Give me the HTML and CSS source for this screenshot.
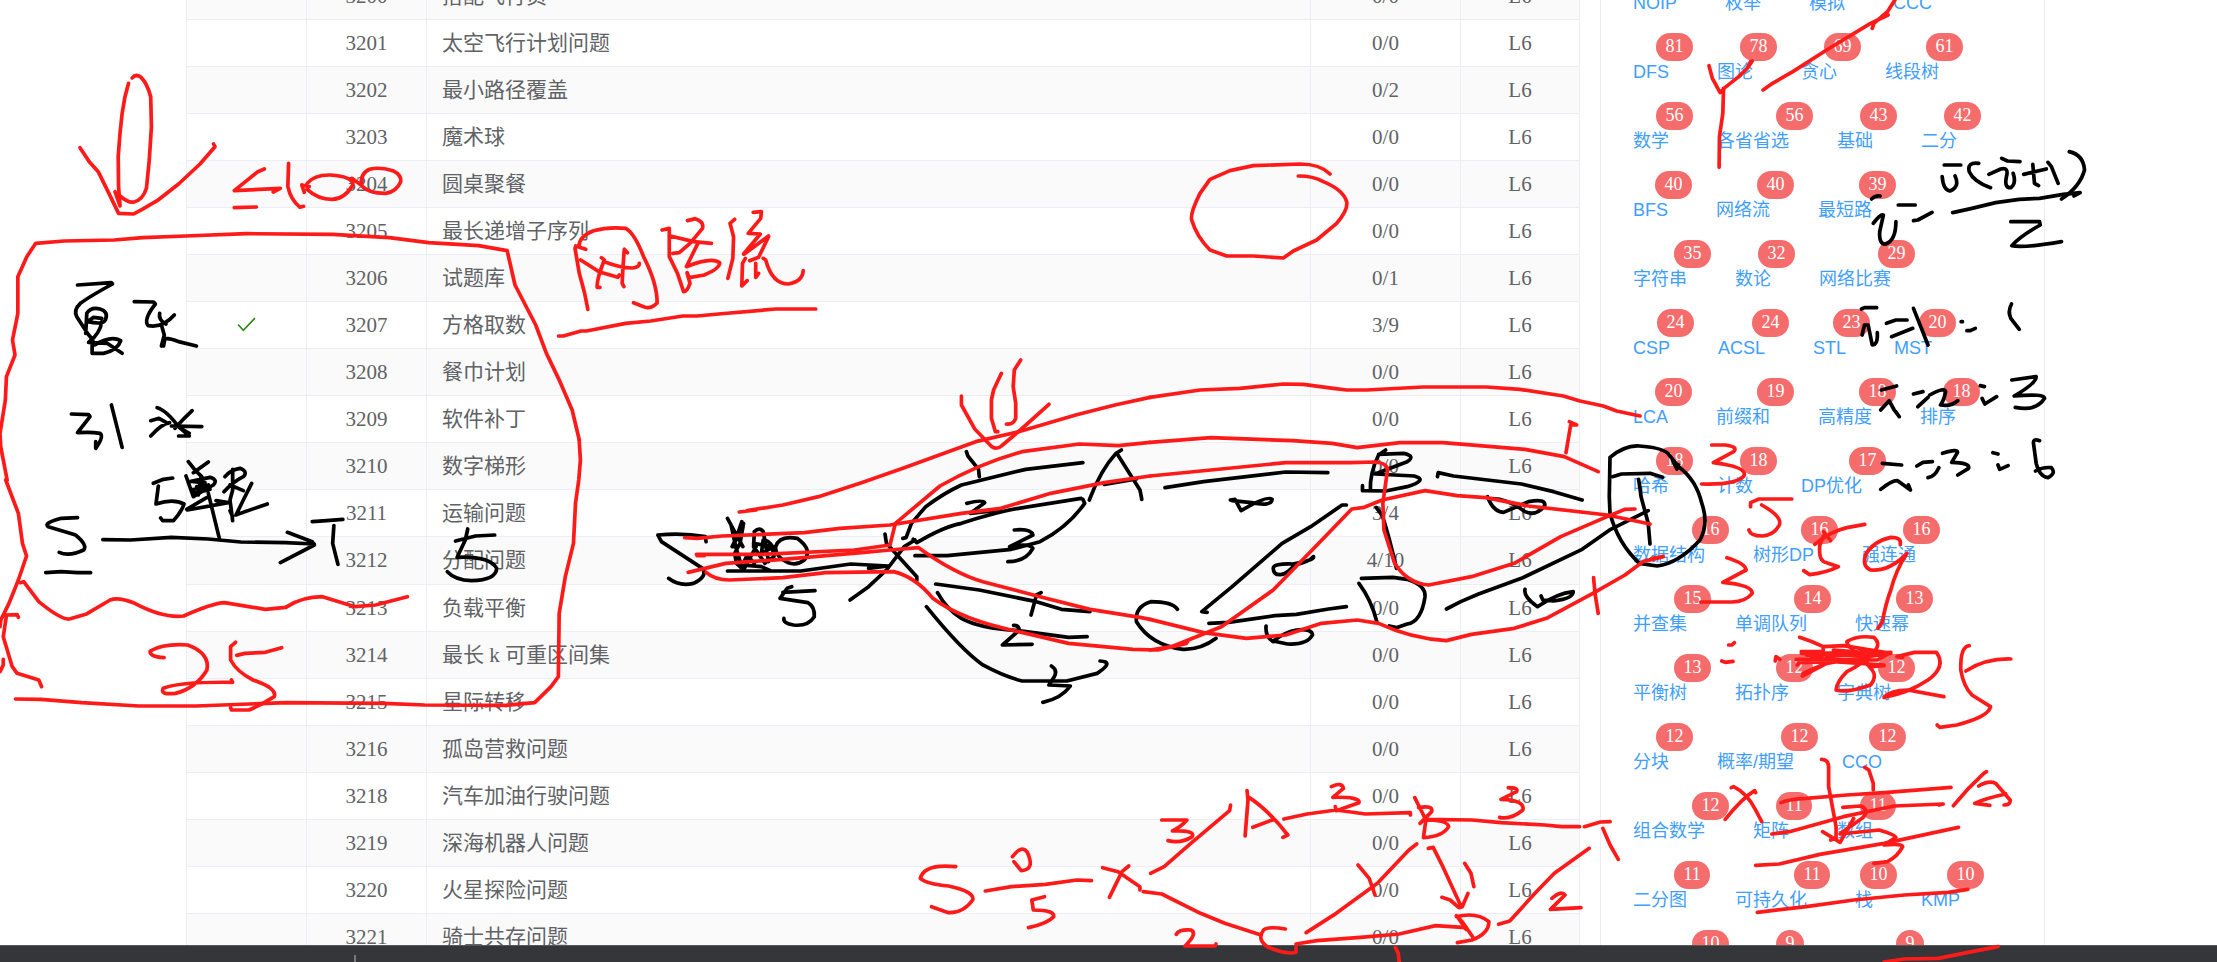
FILE: index.html
```
<!DOCTYPE html>
<html lang="zh-CN">
<head>
<meta charset="utf-8">
<title>题库</title>
<link rel="stylesheet" href="styles.css">
</head>
<body>
<div class="page">
  <main class="content">
    <div class="table">
      <div class="row alt"><div></div><div>3200</div><div>搭配飞行员</div><div>0/0</div><div>L6</div></div>
      <div class="row"><div></div><div>3201</div><div>太空飞行计划问题</div><div>0/0</div><div>L6</div></div>
      <div class="row alt"><div></div><div>3202</div><div>最小路径覆盖</div><div>0/2</div><div>L6</div></div>
      <div class="row"><div></div><div>3203</div><div>魔术球</div><div>0/0</div><div>L6</div></div>
      <div class="row alt"><div></div><div>3204</div><div>圆桌聚餐</div><div>0/0</div><div>L6</div></div>
      <div class="row"><div></div><div>3205</div><div>最长递增子序列</div><div>0/0</div><div>L6</div></div>
      <div class="row alt"><div></div><div>3206</div><div>试题库</div><div>0/1</div><div>L6</div></div>
      <div class="row"><div><svg class="check" viewBox="0 0 18 14"><path d="M1 7 L6 12.5 L17 1"/></svg></div><div>3207</div><div>方格取数</div><div>3/9</div><div>L6</div></div>
      <div class="row alt"><div></div><div>3208</div><div>餐巾计划</div><div>0/0</div><div>L6</div></div>
      <div class="row"><div></div><div>3209</div><div>软件补丁</div><div>0/0</div><div>L6</div></div>
      <div class="row alt"><div></div><div>3210</div><div>数字梯形</div><div>0/0</div><div>L6</div></div>
      <div class="row"><div></div><div>3211</div><div>运输问题</div><div>3/4</div><div>L6</div></div>
      <div class="row alt tall"><div></div><div>3212</div><div>分配问题</div><div>4/10</div><div>L6</div></div>
      <div class="row"><div></div><div>3213</div><div>负载平衡</div><div>0/0</div><div>L6</div></div>
      <div class="row alt"><div></div><div>3214</div><div>最长 k 可重区间集</div><div>0/0</div><div>L6</div></div>
      <div class="row"><div></div><div>3215</div><div>星际转移</div><div>0/0</div><div>L6</div></div>
      <div class="row alt"><div></div><div>3216</div><div>孤岛营救问题</div><div>0/0</div><div>L6</div></div>
      <div class="row"><div></div><div>3218</div><div>汽车加油行驶问题</div><div>0/0</div><div>L6</div></div>
      <div class="row alt"><div></div><div>3219</div><div>深海机器人问题</div><div>0/0</div><div>L6</div></div>
      <div class="row"><div></div><div>3220</div><div>火星探险问题</div><div>0/0</div><div>L6</div></div>
      <div class="row alt"><div></div><div>3221</div><div>骑士共存问题</div><div>0/0</div><div>L6</div></div>
    </div>
    <aside class="tags">
      <div class="line"><a>NOIP</a><a>枚举</a><a>模拟</a><a>CCC</a></div>
      <div class="line"><a>DFS<sup>81</sup></a><a>图论<sup>78</sup></a><a>贪心<sup>69</sup></a><a>线段树<sup>61</sup></a></div>
      <div class="line"><a>数学<sup>56</sup></a><a>各省省选<sup>56</sup></a><a>基础<sup>43</sup></a><a>二分<sup>42</sup></a></div>
      <div class="line"><a>BFS<sup>40</sup></a><a>网络流<sup>40</sup></a><a>最短路<sup>39</sup></a></div>
      <div class="line"><a>字符串<sup>35</sup></a><a>数论<sup>32</sup></a><a>网络比赛<sup>29</sup></a></div>
      <div class="line"><a>CSP<sup>24</sup></a><a>ACSL<sup>24</sup></a><a>STL<sup>23</sup></a><a>MST<sup>20</sup></a></div>
      <div class="line"><a>LCA<sup>20</sup></a><a>前缀和<sup>19</sup></a><a>高精度<sup>18</sup></a><a>排序<sup>18</sup></a></div>
      <div class="line"><a>哈希<sup>18</sup></a><a>计数<sup>18</sup></a><a>DP优化<sup>17</sup></a></div>
      <div class="line"><a>数据结构<sup>16</sup></a><a>树形DP<sup>16</sup></a><a>强连通<sup>16</sup></a></div>
      <div class="line"><a>并查集<sup>15</sup></a><a>单调队列<sup>14</sup></a><a>快速幂<sup>13</sup></a></div>
      <div class="line"><a>平衡树<sup>13</sup></a><a>拓扑序<sup>12</sup></a><a>字典树<sup>12</sup></a></div>
      <div class="line"><a>分块<sup>12</sup></a><a>概率/期望<sup>12</sup></a><a>CCO<sup>12</sup></a></div>
      <div class="line"><a>组合数学<sup>12</sup></a><a>矩阵<sup>11</sup></a><a>数组<sup>11</sup></a></div>
      <div class="line"><a>二分图<sup>11</sup></a><a>可持久化<sup>11</sup></a><a>栈<sup>10</sup></a><a>KMP<sup>10</sup></a></div>
      <div class="line"><a>区间动规<sup>10</sup></a><a>分治<sup>9</sup></a><a>记忆搜索<sup>9</sup></a></div>
    </aside>
  </main>
  <footer class="bar"><span class="tick"></span></footer>

  <svg class="ink" viewBox="0 0 2217 962">
    <g class="black">
      <g transform="scale(.357143 .333333)">
        <path d="M217 855 L312 848 315 852 Q250 890 225 910 Q205 930 215 950 L245 1000 260 1020 M240 1000 L243 940 Q255 920 280 927 Q305 935 295 960 Q290 975 245 965 L262 952 285 955 M285 965 Q280 1000 250 1025 L265 1035 Q310 1005 338 1022 Q330 1050 290 1060 L258 1060 258 1030 M248 1027 L300 1030 342 1060"/>
        <path d="M376 905 L430 906 435 912 Q400 960 415 977 Q455 985 488 945 M447 940 Q443 960 465 972 M452 975 L460 1005 452 1038 M458 1038 L462 1015 Q480 1015 500 1025 L550 1038"/>
        <path d="M200 1242 L248 1244 252 1250 L217 1298 Q255 1295 280 1300 Q292 1310 268 1345 L268 1325 M312 1215 L325 1270 342 1342"/>
        <path d="M440 1223 Q465 1230 500 1280 L530 1308 500 1308 M422 1262 L445 1255 470 1270 M422 1308 Q455 1270 475 1268 M538 1232 Q510 1260 490 1285 M480 1278 L565 1280 M505 1285 L530 1300"/>
      </g>
      <g transform="translate(0 480) scale(.408163 .333333)">
        <path d="M190 113 L150 115 Q105 130 118 140 Q160 155 185 165 Q215 195 205 210 Q170 230 145 217 M112 278 L150 275 190 278 222 278"/>
        <path d="M252 179 L320 180 420 172 510 177 590 186 700 188 770 192 M704 157 L765 185 770 195 687 248"/>
        <path d="M765 125 L800 122 840 118 M818 137 L815 190 828 253"/>
        <path d="M1146 147 L1140 180 1120 232 Q1200 228 1217 265 Q1215 300 1155 302 Q1115 300 1096 275 M1116 183 L1165 168 1212 165"/>
      </g>
      <g transform="translate(130 450) scale(.333333)">
        <path d="M70 100 L100 88 128 84 M85 108 L78 162 Q130 145 162 162 Q155 185 130 212 L98 212 92 204"/>
        <path d="M175 35 L195 60 215 80 M235 36 L190 68 M168 78 L190 140 M180 95 L240 82 Q265 90 250 105 L190 140 M190 95 L225 98 205 130 M200 110 L240 118 190 130 M212 85 L205 135 M185 120 L235 105 M170 178 L235 140 M172 180 L295 158 258 152 M235 130 L252 200 268 265"/>
        <path d="M285 80 Q300 60 330 55 Q355 65 340 80 Q310 95 282 125 M308 58 L308 120 300 150 308 212 M300 182 L308 200 M300 105 L340 122 M365 100 L340 150 318 195 Q345 185 412 162"/>
      </g>
      <g transform="translate(640 400) scale(.357143 .333333)">
        <path d="M185 425 L183 410 Q120 398 50 405 L60 425 175 505 Q190 530 150 550 Q110 560 80 535"/>
        <path d="M245 355 L255 375 288 440 M285 365 L262 440 M255 375 L268 440 285 500 300 490 M258 440 L290 370 280 430 L265 460 270 490 290 510 325 440 M320 395 Q335 380 345 395 L360 485 M320 400 L318 440 350 490 M345 420 L340 460 375 440 M318 430 L375 440 375 470 355 485 M350 420 Q375 430 372 460 M285 500 L300 465 320 490 M380 440 Q390 405 440 415 Q485 450 460 480 Q430 505 395 475 Q378 460 380 440"/>
        <path d="M245 513 L450 513 590 492 695 498 640 505 M285 495 L340 500 365 512"/>
        <path d="M425 560 L412 565 392 595 M400 577 L490 572 M392 595 L470 608 Q490 620 488 650 Q470 680 430 675 Q400 670 403 655"/>
        <path d="M686 402 L690 430 775 530 775 542 M770 420 L740 440 690 510 640 560 588 600"/>
        <path d="M736 415 L745 413 760 370 800 320 Q850 280 900 255 L1080 208 1240 188 M765 418 L775 428 Q850 380 900 370 Q1000 335 1060 325 L1235 295 M770 467 L860 467 1040 448 1120 425 Q1200 380 1245 310 L1240 298"/>
        <path d="M1258 300 Q1290 210 1333 160 L1348 150 M1335 160 L1400 270 1405 298 M1300 253 L1390 237"/>
        <path d="M914 155 L918 168 948 208 950 230 M915 310 Q960 298 965 308 L925 340 1010 330 M1048 390 Q1095 385 1100 405 L1035 440 Q1090 428 1100 445 Q1080 485 1030 485"/>
        <path d="M828 552 L950 570 1110 605 1180 628 1260 635 M1123 578 L1110 585 1095 645 M833 578 Q860 630 900 655 Q950 685 1060 692 L1200 712 1252 710 M1046 676 Q1060 675 1062 690 L1015 735 1098 733"/>
        <path d="M802 620 Q900 750 960 795 Q1020 830 1070 843 L1195 843 1280 820 Q1330 785 1288 783 M1152 798 Q1170 810 1160 830 L1145 855 1205 858 Q1180 895 1128 907"/>
        <path d="M1505 628 Q1490 605 1430 605 Q1385 620 1390 665 Q1430 735 1520 748 Q1570 750 1613 715"/>
      </g>
      <g transform="translate(1150 420) scale(.357143 .333333)">
        <path d="M42 203 L150 185 380 156 498 158 M225 240 L238 238 255 272 Q330 225 342 238 Q340 260 285 248 L230 242"/>
        <path d="M660 90 L640 105 Q615 160 617 212 M640 103 L710 100 Q745 108 720 125 L630 162 L740 168 Q780 180 720 200 L660 213 595 212 595 197"/>
        <path d="M633 262 L650 285 Q670 350 690 445 M550 255 L538 255 450 320 370 370 230 500 145 575 160 577 M165 610 L220 607 350 587 410 583 500 567 550 560"/>
        <path d="M458 410 Q460 420 400 432 Q345 430 345 445 Q345 465 365 464 Q385 462 405 435 Q445 425 455 412 M325 618 Q322 650 345 665 M345 663 Q380 635 410 630 Q455 625 455 645 Q440 675 385 672 L345 663"/>
        <path d="M592 475 L680 472 720 478 Q772 495 770 530 Q760 605 720 612 L690 623 670 618 M585 490 Q620 540 635 605"/>
        <path d="M805 170 L807 158 850 168 1040 192 1130 215 1210 240 M945 230 Q960 275 990 277 L1060 245 Q1110 235 1105 258 Q1080 290 1050 275 Q1000 235 955 236"/>
        <path d="M830 567 L870 545 920 522 1040 475 1210 388 1290 328 1395 272 M1050 508 Q1045 530 1085 560 Q1140 520 1185 515 Q1185 535 1130 543 L1100 540 1095 528"/>
        <path d="M1295 170 L1320 162 1400 160 1435 172 M1368 178 L1370 190 1375 230 1395 310 1400 372"/>
        <path d="M1288 280 L1286 230 1288 112 Q1330 75 1370 78 Q1430 82 1450 100 L1480 140 Q1530 180 1545 250 Q1565 310 1540 360 Q1480 430 1420 438 L1370 430 Q1310 370 1288 280 M1463 120 L1475 147 1480 135"/>
      </g>
      <g transform="translate(1590 0) scale(.33801 .333333)">
        <path d="M1048 495 L1097 495 M1042 530 Q1045 570 1065 573 Q1095 560 1080 528 M1150 490 Q1115 485 1122 515 Q1135 545 1185 563 M1180 523 L1215 507 Q1240 500 1232 530 Q1225 565 1245 563 Q1262 550 1252 520 M1218 475 L1235 483 1272 485 M1283 523 L1350 507 M1310 493 L1315 550 1327 557 M1355 487 L1365 500 1385 550 M1418 455 Q1460 465 1463 510 Q1450 560 1395 597"/>
        <path d="M1073 638 L1130 625 1200 608 1270 598 1330 595 1400 583 1450 578 1432 588 M1245 665 L1330 665 1332 675 Q1270 710 1248 737 Q1280 745 1395 725"/>
        <path d="M833 597 Q845 585 858 588 M838 670 Q860 640 868 645 L857 695 Q855 735 875 732 Q905 720 905 665 M912 615 L962 615 M957 662 L970 660 1012 637"/>
      </g>
      <g transform="translate(1590 300) scale(.33801 .333333)">
        <path d="M803 27 L812 23 848 23 M805 105 L812 75 823 75 835 135 Q852 135 850 98 M877 70 L905 60 938 60 M892 110 L955 85 M957 25 L1000 135 M1098 65 h4 M1115 92 L1125 92 1140 85 M1247 12 Q1235 35 1245 55 L1270 88"/>
        <path d="M862 270 L907 258 M860 330 L885 302 900 330 915 350 905 335 M957 282 L985 275 M970 320 L1000 292 M1005 285 Q1050 260 1052 275 Q1048 300 1037 315 Q1070 320 1088 302 M1155 257 L1167 260 M1160 295 L1168 312 1203 290 M1248 240 L1320 230 Q1320 250 1255 288 Q1345 280 1345 295 Q1320 335 1258 322"/>
        <path d="M865 490 L922 495 M860 568 Q895 540 910 542 L948 570 942 555 M967 498 L985 487 1013 485 M1000 533 Q1020 530 1032 503 M1043 460 Q1090 445 1087 458 L1070 487 Q1125 488 1120 505 L1088 525 M1192 458 L1207 462 M1207 495 L1212 508 1237 497 M1330 422 Q1310 415 1312 430 L1320 490 Q1330 530 1355 533 Q1380 520 1365 503 Q1340 500 1318 513"/>
      </g>
    </g>
    <g class="red">
      <g transform="scale(.357143 .333333)">
        <path d="M360 250 L350 290 342 340 336 400 331 470 332 560 336 618 322 575 M336 588 Q360 610 375 606 Q400 600 410 565 L418 480 424 380 422 290 Q412 250 395 232 Q380 220 370 234"/>
        <path d="M224 443 L250 485 275 515 305 580 332 640 374 642 398 628 440 602 500 552 560 492 602 440 598 432"/>
        <path d="M740 507 L722 515 656 572 785 565 765 576 M656 623 L718 621 M808 490 L806 560 Q814 600 840 622 L850 619"/>
        <path d="M866 560 L845 555 852 577 M860 550 Q880 524 925 525 Q990 530 988 555 Q965 597 930 598 Q890 598 860 568 M985 535 L1012 556 Q1008 520 1035 508 Q1060 500 1100 512 Q1125 525 1122 545 Q1110 575 1080 580 Q1030 580 1012 556"/>
        <path d="M20 1440 L2 1340 0 1300 15 1200 18 1130 42 1065 35 1020 50 940 50 830 75 770 100 730 180 723 320 720 400 713 520 708 690 701 930 703 1090 713 1200 728 1340 737 1420 752 1442 855 1500 975 1530 1060 1568 1145 1602 1230 1622 1320"/>
      </g>
      <g transform="translate(0 480) scale(.408163 .333333)">
        <path d="M14 0 L45 100 55 190 65 228 45 300 22 370 2 420 0 440 M45 412 L42 404 16 405 8 470 30 560 42 580 95 600 102 620 M0 575 L8 555 8 538"/>
        <path d="M38 657 L100 658 200 668 340 678 480 678 700 668 940 670 1040 675 1240 676 1310 668 1350 620 1368 590 1370 400 1385 290 1405 190 1410 70 1418 0 1422 -60 1419 -120"/>
        <path d="M50 308 L58 305 95 365 Q150 420 170 417 L210 403 270 360 Q290 350 330 370 Q400 415 450 408 Q520 370 550 368 L650 388 700 382 Q740 350 790 350 L870 380 920 375 998 350"/>
        <path d="M402 533 Q365 530 368 513 Q400 490 460 495 Q515 520 507 570 Q480 625 430 640 Q390 645 400 625 Q440 605 570 607 L567 600"/>
        <path d="M577 487 L565 500 565 540 Q580 575 620 600 Q680 625 672 650 Q640 675 610 690 L567 690 565 683 M580 526 L600 520 650 517 690 503"/>
      </g>
      <g transform="translate(540 140) scale(.357143 .333333)">
        <path d="M128 328 L100 318 98 325 110 400 125 460 134 508 M110 318 Q108 290 150 272 Q190 260 240 265 Q265 280 290 350 Q328 430 328 488 Q310 510 290 500 L262 488"/>
        <path d="M114 360 L165 395 218 412 222 405 M172 353 L180 360 Q158 420 160 442 L168 442 M180 365 Q230 385 260 384 Q280 380 278 370 M245 338 L236 328 Q232 380 230 430 L235 440"/>
        <path d="M342 270 L362 265 362 350 385 400 402 455 Q412 455 420 430 L412 400 M365 288 L430 305 480 310 M413 242 L435 236 Q460 245 455 265 L420 310 390 338 372 340 M442 310 L410 380 Q480 350 503 368 Q505 385 460 405 L418 413 412 398"/>
        <path d="M545 238 L532 250 542 290 540 355 526 415 M597 217 L620 215 618 235 583 280 617 282 570 342 M640 288 L572 342 M640 290 L612 352 587 362 M575 355 L567 370 565 438 580 422 M604 370 L604 412 612 400 M625 355 L632 360 Q650 432 695 432 Q735 425 737 392"/>
        <path d="M52 588 L65 588 115 573 130 573 240 550 310 543 400 528 440 528 500 522 660 507 772 507"/>
        <path d="M1292 700 L1270 750 1264 780 1264 835 1275 875 1282 875 M1346 660 L1328 690 1325 740 1332 790 1332 835 Q1325 855 1306 852"/>
      </g>
      <g transform="translate(640 400) scale(.357143 .333333)">
        <path d="M900 -12 L900 15 938 88 985 140 Q1000 150 1012 138 L1065 90 1145 13"/>
        <path d="M278 336 L325 330 L300 332 400 315 500 290 620 248 740 203 940 125 1060 95 1220 45 1330 15 1428 -8"/>
        <path d="M125 413 L160 415 230 408 460 398 560 385 700 375 900 340 1010 325 1150 280 1300 248 1428 228"/>
        <path d="M158 463 L340 463 600 450 700 435 715 370 840 258 Q950 190 1070 155 L1230 132 1340 137 1428 127 M160 467 L180 467"/>
        <path d="M135 517 L240 490 400 478 620 458 700 450 780 443 Q880 520 960 545 L1120 590 1260 628 1400 652 1428 658"/>
        <path d="M185 517 Q210 540 250 540 L400 533 520 518 710 515 Q770 530 820 595 Q900 660 1060 695 L1200 730 1380 748 1450 750 1530 730 1500 738"/>
      </g>
      <g transform="translate(1150 120) scale(.333333)">
        <path d="M0 832 L150 810 270 805 400 792 460 793 550 805 590 810 650 810 820 801 1010 801 1110 808 1240 828 1290 843 1360 858 1400 873 1470 888 1455 885"/>
        <path d="M540 162 Q510 132 450 132 L310 137 240 152 180 178 150 220 Q120 280 125 300 Q140 350 180 390 L230 408 310 408 400 414 430 393 500 360 560 310 Q595 270 590 245 Q580 210 520 185 Q490 168 445 168"/>
        <path d="M1248 998 L1262 915 1280 915 1258 905"/>
      </g>
      <g transform="translate(1150 420) scale(.357143 .333333)">
        <path d="M0 67 L170 53 400 62 510 70 580 83 700 68 820 68 1050 88 1160 110 1255 155"/>
        <path d="M0 168 L380 128 560 128 630 126 Q665 130 665 150 L652 250 655 330 685 430 Q720 490 780 495 L900 470 1020 430 1150 350 1280 290 1330 268 1358 267"/>
        <path d="M0 598 L150 638 270 655 380 645 480 610 580 600 640 610 Q730 655 830 662 L900 643 1020 625 1110 595 1240 520 1330 465 1380 425 1437 410 1405 415"/>
        <path d="M0 690 L60 680 200 620 345 510 490 350 565 267 600 262 650 240 770 212 860 227 940 233 1060 258 1280 285 1400 312 M75 675 L105 665 M1242 473 L1246 520 1255 580"/>
      </g>
      <g transform="translate(900 740) scale(.484694 .333333)">
        <path d="M115 380 Q50 370 42 415 Q55 432 100 438 Q155 455 150 480 Q130 520 100 518 L65 500 M232 350 Q250 315 262 335 Q280 390 250 392 L235 365 M298 470 L272 480 275 510 Q320 510 317 530 Q305 550 265 563 M176 453 L230 440 300 433 365 420 395 422"/>
        <path d="M418 383 L450 395 495 440 495 450 M472 378 L458 395 432 472 M517 400 L545 380 600 310 680 212 682 195 M540 240 L592 240 Q580 260 562 273 Q610 270 603 290 Q580 312 553 302"/>
        <path d="M716 152 L718 180 712 288 M720 172 Q760 210 800 285 L790 292 M728 262 L768 240 M792 237 L840 222 900 210 960 222 1053 218 1053 225 M890 140 Q912 125 915 145 L893 172 Q950 170 947 188 L900 212 898 200"/>
        <path d="M1062 173 L1085 240 1080 292 M1070 203 Q1100 195 1097 215 L1073 250 M1080 240 Q1130 240 1132 260 Q1120 290 1080 293 M1085 238 L1180 240 1240 248 1330 255 1365 260 1402 260 M1255 143 Q1277 143 1272 155 L1240 178 Q1290 180 1285 210 Q1260 240 1237 232 M1412 260 L1445 246 1465 245 M1450 265 L1465 315 1482 358"/>
        <path d="M502 455 L540 462 620 520 670 550 745 585 M795 567 Q760 558 750 570 Q735 600 760 622 Q800 645 817 637 L817 622 M570 583 Q575 568 600 570 Q615 580 588 618 L650 618 652 612 M838 578 L900 520 985 430 1050 330 1066 312 M945 375 L968 415 980 465"/>
        <path d="M817 612 L860 602 950 592 1030 582 1105 557 1168 563 M1090 325 L1100 322 1120 380 1158 500 M1118 472 L1135 480 1153 503 1160 500 1172 460 M1165 370 L1178 400 1184 440"/>
        <path d="M1150 530 L1168 568 M1148 527 L1160 545 1182 592 M1148 530 Q1190 515 1215 545 Q1215 580 1180 600 L1150 608 M1235 553 L1258 543 1310 460 1350 400 1422 325 M1345 475 Q1365 450 1372 465 L1342 508 1405 503 M1022 622 L1028 640 1030 668"/>
      </g>
      <g transform="translate(1590 0) scale(.33801 .333333)">
        <path d="M512 270 L540 250 600 215 700 150 830 70 882 45 M835 85 L840 70 880 35 905 -5 M352 197 L362 235 385 278 400 262 440 230 465 205 480 183 M395 265 L393 340 383 410 382 502 M465 205 L475 185"/>
      </g>
      <g transform="translate(1590 300) scale(.33801 .333333)">
        <path d="M360 435 L400 435 Q440 440 425 455 L365 488 Q460 500 457 525 Q440 555 330 552 M597 597 L500 597 475 608 475 620 M508 615 Q570 650 560 675 Q545 705 510 708 Q475 708 470 690"/>
      </g>
      <g transform="translate(1590 500) scale(.33801 .333333)">
        <path d="M813 73 L760 83 Q710 95 665 133 M690 95 L712 122 M695 98 L680 135 Q675 185 700 188 L735 200 Q700 218 650 224 L632 212"/>
        <path d="M918 133 Q922 112 890 112 Q835 125 815 165 Q805 200 830 210 Q885 215 938 160 Q905 210 890 270 Q875 310 865 365 L852 385"/>
        <path d="M405 173 Q460 190 462 210 L393 247 Q480 255 480 280 Q460 305 420 306 L328 306 M410 435 L420 435 427 428 M390 483 L400 487 423 484 M548 483 L550 470 562 478"/>
        <path d="M620 412 Q660 425 690 440 L690 455 625 455 M625 460 L890 457 M690 440 L750 437 890 460 820 470 640 460 M610 478 L850 480 890 457 700 470 M613 495 L620 488 720 485 870 495 M628 528 L700 490 760 480 M640 465 L720 480 630 520 M830 500 L870 497 M720 450 L880 463"/>
        <path d="M820 485 Q760 440 760 425 Q790 405 840 412 Q860 430 845 450 Q810 490 760 515 Q730 545 728 570 Q760 580 830 555 Q850 530 835 510 L805 475"/>
        <path d="M925 472 L908 470 960 457 1025 457 Q1055 500 1000 540 Q940 580 870 592 Q890 570 940 570 L1047 590 M1122 437 Q1095 440 1097 510 Q1105 560 1130 585 L1185 620 Q1180 650 1085 675 L1035 682 1027 675 M1112 513 Q1170 475 1245 477"/>
      </g>
      <g transform="translate(1590 720) scale(.33801 .333333)">
        <path d="M685 118 Q705 118 706 140 L706 200 728 320 728 355 712 360 M688 335 L740 367 780 295 M813 142 L825 150 838 190 838 210"/>
        <path d="M565 248 Q590 237 640 235 L760 225 880 217 1068 202 M538 342 L590 335 750 290 900 258 1045 252 1033 255 M748 262 L800 258 Q830 270 805 295 L748 335 740 342 855 330 Q905 345 905 352 L870 375 Q925 370 925 380 Q910 410 880 425 L840 430"/>
        <path d="M490 436 L560 432 680 403 870 370 1090 322 M495 577 L640 560 780 540 930 525 1060 517 1118 508"/>
        <path d="M418 203 L425 200 Q465 220 490 270 L508 305 M490 218 L487 212 Q450 235 400 298 M1173 155 L1165 160 1120 205 1075 257 M1150 198 Q1180 180 1200 190 L1243 240 Q1245 255 1225 255 M1230 222 Q1170 235 1138 250 L1183 256 M870 726 L930 717 1030 715 1130 695 1207 680"/>
      </g>
    </g>
  </svg>
</div>
</body>
</html>
```
FILE: styles.css
```
* { box-sizing: border-box; }
body { margin: 0; background: #fff; }

.page {
  position: relative;
  width: 2217px;
  height: 962px;
  overflow: hidden;
}
.content {
  display: flex;
  height: 945px;
  padding-left: 186px;
  overflow: hidden;
}

.table {
  flex: none;
  width: 1394px;
  height: 1050px;
  margin-top: -27px;
  border-left: 1px solid #ebeef5;
  color: #606266;
  font: 400 21px "Liberation Serif", "Noto Sans CJK SC", serif;
}
.row {
  display: grid;
  grid-template-columns: 120px 120px 884px 150px 119px;
  height: 47px;
}
.row.tall { height: 48px; }
.row.alt { background: #fafafa; }
.row > div {
  height: 100%;
  border-right: 1px solid #ebeef5;
  border-bottom: 1px solid #ebeef5;
  line-height: 46px;
  text-align: center;
  white-space: nowrap;
}
.row > div:nth-child(3) {
  padding-left: 15px;
  text-align: left;
}
.check {
  width: 19px;
  height: 15px;
  vertical-align: 0;
  fill: none;
  stroke: #2f8a1c;
  stroke-width: 1.6;
}

.tags {
  flex: none;
  width: 445px;
  height: 1100px;
  margin: -36px 0 0 20px;
  padding-left: 32px;
  border: 1px solid #ebeef5;
  border-width: 0 1px;
}
.line {
  display: flex;
  gap: 48px;
  height: 69px;
  padding-top: 26px;
}
.line a {
  position: relative;
  color: #409eff;
  font: 400 18px/27px "Liberation Sans", "Noto Sans CJK SC", sans-serif;
  white-space: nowrap;
}
.line sup {
  position: absolute;
  top: -26px;
  left: calc(100% - 13px);
  height: 28px;
  padding: 0 9.5px;
  border-radius: 15px;
  background: #f56c6c;
  color: #fff;
  font: 18px/27px "Liberation Serif", serif;
}

.bar {
  height: 17px;
  padding: 9px 0 0 354px;
  border-top: 1px solid #55575b;
  background: #35363a;
}
.tick {
  display: block;
  width: 2px;
  height: 8px;
  background: #77797d;
}

.ink {
  position: absolute;
  left: 0;
  top: 0;
  width: 2217px;
  height: 962px;
  pointer-events: none;
}
.ink path {
  fill: none;
  stroke-width: 3.7;
  stroke-linecap: round;
  stroke-linejoin: round;
  vector-effect: non-scaling-stroke;
}
.black path { stroke: #000; }
.red path { stroke: #ff1a1a; }
```
